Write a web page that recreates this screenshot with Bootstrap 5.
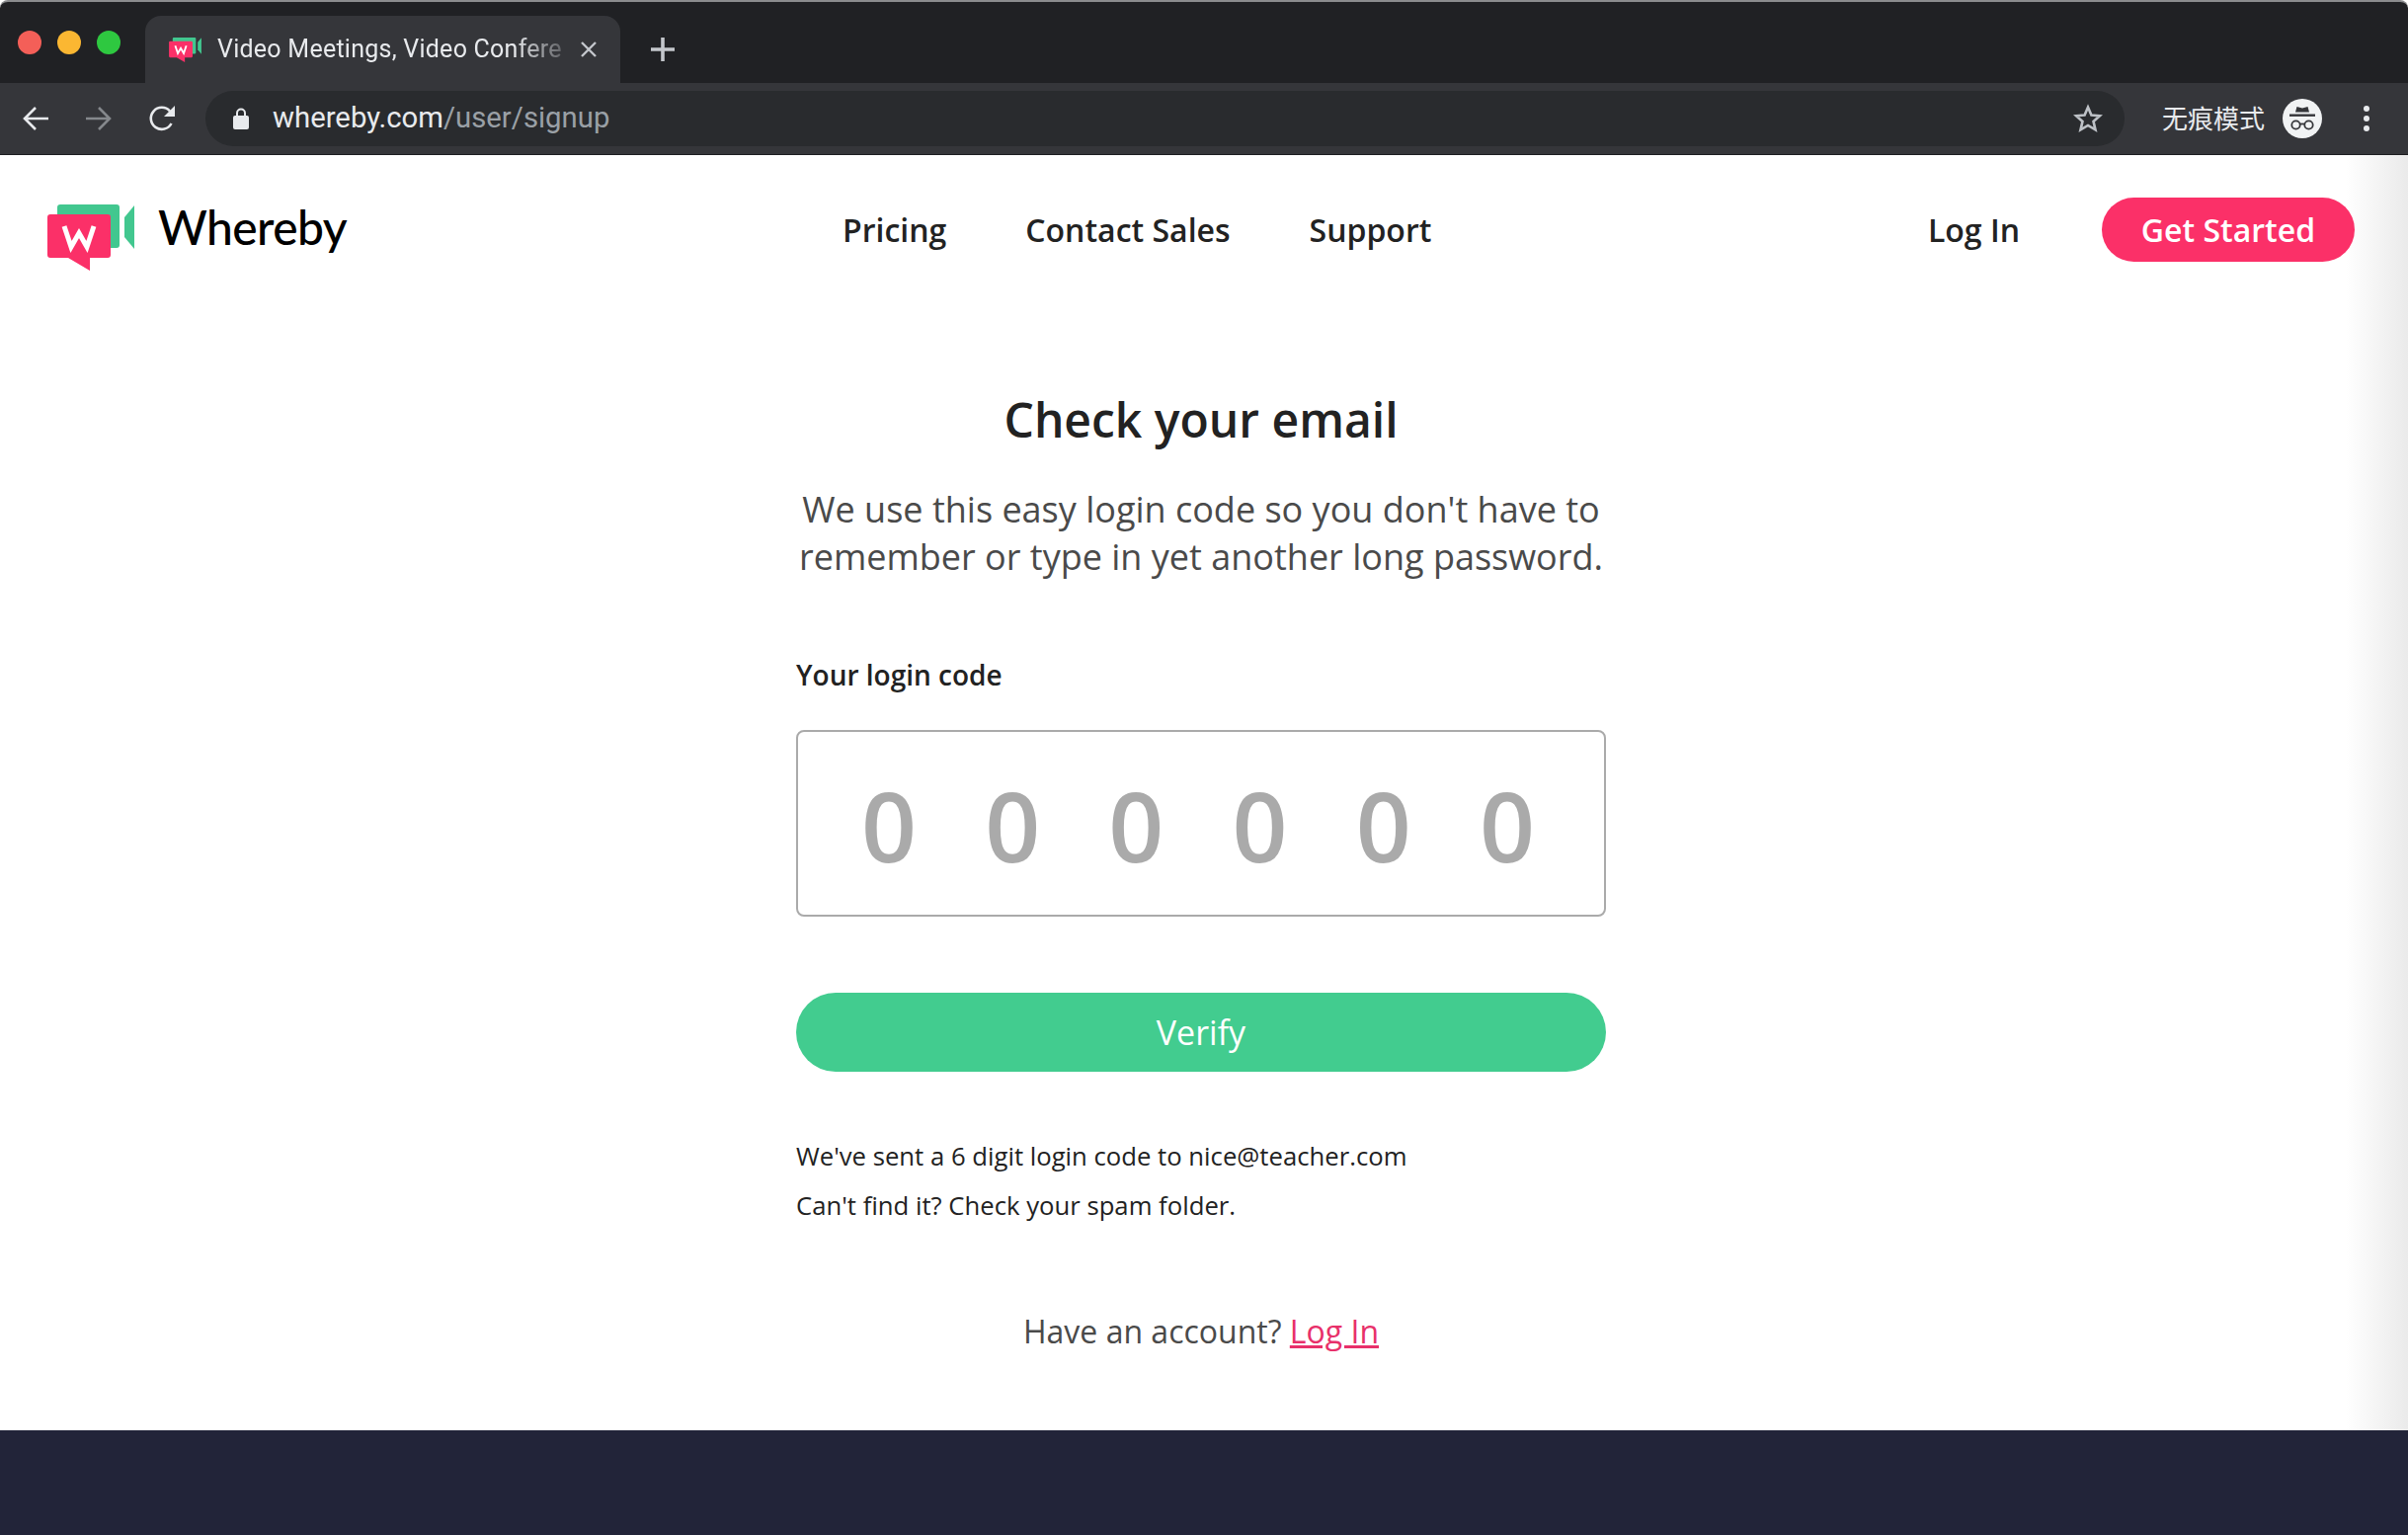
<!DOCTYPE html>
<html lang="en">
<head>
  <meta charset="UTF-8" />
  <meta name="viewport" content="width=device-width, initial-scale=1.0" />
  <title>Whereby - Check your email</title>
  <link href="https://cdn.jsdelivr.net/npm/bootstrap@5.3.0/dist/css/bootstrap.min.css" rel="stylesheet">
  <style>
    html, body { height: 100%; }
    body { width: 2438px; height: 1554px; overflow: hidden; font-family: "Open Sans", sans-serif; color: #222; background: #fff; }

    /* browser chrome */
    .tab-strip { height: 84px; flex: none; background: #202124; border-top: 2px solid #8b8c8e; border-radius: 8px 8px 0 0; }
    .lights { width: 147px; padding-left: 18px; gap: 16px; height: 82px; }
    .light { width: 24px; height: 24px; border-radius: 50%; }
    .browser-tab { width: 481px; height: 68px; margin-top: 14px; background: #35363a; border-radius: 16px 16px 0 0; padding: 0 23px 0 24px; }
    .tab-title { font-family: Roboto, sans-serif; font-size: 25px; letter-spacing: .25px; color: #e8eaed; margin-left: 16px; white-space: nowrap;
      -webkit-mask-image: linear-gradient(to right, #000 86%, rgba(0,0,0,.25) 100%); mask-image: linear-gradient(to right, #000 86%, rgba(0,0,0,.25) 100%); }
    .new-tab { margin-left: 31px; margin-top: 14px; }
    .tool-bar { height: 73px; flex: none; background: #35363a; border-bottom: 1px solid #1c1d20; padding: 0 0 0 22px; }
    .tool-icon { width: 64px; flex: none; }
    .omni-box { width: 1943px; height: 56px; margin-left: -6px; background: #292b2e; border-radius: 28px; padding: 0 22px 0 28px; }
    .url-text { font-family: Roboto, sans-serif; font-size: 29.300px; color: #e8eaed; margin-left: 24px; }
    .url-text span { color: #9aa0a6; }
    .incog-label { font-family: "Noto Sans CJK SC", sans-serif; font-size: 26px; line-height: 1; color: #e8eaed; margin-left: 38px; margin-top: -3px; white-space: nowrap; }
    .incog-face { width: 40px; height: 40px; margin-left: 18px; flex: none; }
    .dots-icon { margin-left: 41px; flex: none; }

    /* page */
    .page-main { height: 1291px; flex: none; padding: 43px 54px 0 48px;
      background: linear-gradient(to right, #fff 2375px, #eaeaea 2438px); }
    .top-nav { height: 65px; }
    .brand-box { width: 302px; flex: none; }
    .logo-mark { flex: none; margin-top: 15px; }
    .brand-name { font-family: Lato, sans-serif; font-size: 48px; font-weight: 500; letter-spacing: -.6px; color: #000; margin-left: 24px; line-height: 1; margin-top: -6px; }
    .nav-links { margin-left: 503px; gap: 80px; }
    .nav-item-link { font-size: 32px; font-weight: 600; color: #222; text-decoration: none; }
    .login-link { margin-left: auto; margin-right: 83px; }
    .start-btn { width: 256px; height: 65px; background: #fb3068; color: #fff; border: 0; border-radius: 33px; font-size: 32px; font-weight: 600; padding: 0; }
    .signup-col { width: 820px; margin: 0 auto; }
    .check-title { font-size: 48px; font-weight: 600; text-align: center; margin: 126px 0 0; line-height: 68px; color: #222; }
    .check-sub { font-size: 36px; line-height: 48px; color: #4a4a4a; text-align: center; margin: 33px 0 0; white-space: nowrap; }
    .code-label { font-size: 28px; font-weight: 600; margin: 75px 0 0; line-height: 40px; color: #222; }
    .code-box { height: 189px; margin-top: 36px; border: 2px solid #aaa; border-radius: 8px; padding: 3px 68px 0 62px; }
    .code-digit { font-size: 98px; font-weight: 600; line-height: 1; color: #aaa; width: 60px; text-align: center; }
    .verify-btn { height: 80px; width: 100%; margin-top: 77px; background: #42cc8f; color: #fff; border: 0; border-radius: 40px; font-size: 34px; font-weight: 500; padding: 0; }
    .info-line { font-size: 25.700px; line-height: 50px; margin: 0; color: #222; white-space: nowrap; }
    .have-account { font-size: 32px; line-height: 46px; color: #4a4a4a; text-align: center; margin: 79px 0 0; }
    .have-account a { color: #e8306a; }
    .page-foot { height: 106px; flex: none; background: #222439; }
  </style>
</head>
<body class="d-flex flex-column">
  <div class="tab-strip d-flex">
    <div class="lights d-flex align-items-center">
      <span class="light" style="background:#f45f58"></span>
      <span class="light" style="background:#fbb732"></span>
      <span class="light" style="background:#2ec840"></span>
    </div>
    <div class="browser-tab d-flex align-items-center">
      <svg class="flex-none" width="33" height="25" viewBox="0 0 88 67">
        <rect x="10" width="63" height="44" rx="3" fill="#42c78f"/><path d="M78 13 88 1v44L78 33z" fill="#42c78f"/>
        <path d="M3 10h58a3 3 0 0 1 3 3v38a3 3 0 0 1-3 3H43v13L21 54H3a3 3 0 0 1-3-3V13a3 3 0 0 1 3-3z" fill="#fb3068"/>
        <path d="M17 22l7 21 8-14 8 14 7-21" fill="none" stroke="#fff" stroke-width="5"/>
      </svg>
      <div class="tab-title">Video Meetings, Video Confere</div>
      <svg class="ms-auto" width="18" height="18" viewBox="0 0 18 18"><path d="M2 2l14 14M16 2L2 16" stroke="#c4c7cc" stroke-width="2.4"/></svg>
    </div>
    <svg class="new-tab align-self-center" width="24" height="24" viewBox="0 0 24 24"><path d="M12 0v24M0 12h24" stroke="#c4c7cc" stroke-width="3.6"/></svg>
  </div>

  <div class="tool-bar d-flex align-items-center">
    <div class="tool-icon"><svg class="d-block" width="28" height="28" viewBox="0 0 28 28"><path d="M27 14H3M14 3 3 14l11 11" fill="none" stroke="#e8eaed" stroke-width="2.6"/></svg></div>
    <div class="tool-icon"><svg class="d-block" width="28" height="28" viewBox="0 0 28 28"><path d="M1 14h24M14 3l11 11-11 11" fill="none" stroke="#85888c" stroke-width="2.6"/></svg></div>
    <div class="tool-icon"><svg class="d-block" width="28" height="28" viewBox="0 0 28 28"><path d="M23.5 19A11 11 0 1 1 22 6.5" fill="none" stroke="#e8eaed" stroke-width="2.6"/><path d="M27 1v11H16z" fill="#e8eaed"/></svg></div>
    <div class="omni-box d-flex align-items-center">
      <svg width="16" height="22" viewBox="0 0 16 22"><path d="M4 9V5.500a4 4 0 0 1 8 0V9" fill="none" stroke="#e8eaed" stroke-width="2"/><rect y="8" width="16" height="14" rx="2" fill="#e8eaed"/></svg>
      <div class="url-text">whereby.com<span>/user/signup</span></div>
      <svg class="ms-auto" width="30" height="30" viewBox="0 0 30 30"><path d="M15 3.500l3.400 8 8.600.7-6.500 5.700 2 8.500-7.500-4.500-7.500 4.500 2-8.500L3 12.200l8.600-.7z" fill="none" stroke="#bdc1c6" stroke-width="2.600"/></svg>
    </div>
    <div class="incog-label">无痕模式</div>
    <svg class="incog-face" viewBox="0 0 40 40">
      <circle cx="20" cy="20" r="20" fill="#f1f3f4"/>
      <path d="M13 13.500l1.500-5.500 5.500 1.500L25.500 8l1.500 5.500z" fill="#35363a"/>
      <rect x="7" y="15.500" width="26" height="2.400" fill="#35363a"/>
      <circle cx="13.500" cy="26.500" r="4.200" fill="none" stroke="#35363a" stroke-width="1.800"/>
      <circle cx="26.500" cy="26.500" r="4.200" fill="none" stroke="#35363a" stroke-width="1.800"/>
      <path d="M17.500 25.500h5" stroke="#35363a" stroke-width="1.800"/>
    </svg>
    <svg class="dots-icon" width="8" height="28" viewBox="0 0 8 28"><circle cx="4" cy="4" r="3" fill="#e8eaed"/><circle cx="4" cy="14" r="3" fill="#e8eaed"/><circle cx="4" cy="24" r="3" fill="#e8eaed"/></svg>
  </div>

  <div class="page-main">
    <nav class="top-nav d-flex align-items-center">
      <div class="brand-box d-flex align-items-center">
        <svg class="logo-mark" width="88" height="67" viewBox="0 0 88 67">
          <rect x="10" width="63" height="44" rx="3" fill="#42c78f"/><path d="M78 13 88 1v44L78 33z" fill="#42c78f"/>
          <path d="M3 10h58a3 3 0 0 1 3 3v38a3 3 0 0 1-3 3H43v13L21 54H3a3 3 0 0 1-3-3V13a3 3 0 0 1 3-3z" fill="#fb3068"/>
          <path d="M17 22l7 21 8-14 8 14 7-21" fill="none" stroke="#fff" stroke-width="5"/>
        </svg>
        <span class="brand-name">Whereby</span>
      </div>
      <div class="nav-links d-flex">
        <a class="nav-item-link" href="#">Pricing</a>
        <a class="nav-item-link" href="#">Contact Sales</a>
        <a class="nav-item-link" href="#">Support</a>
      </div>
      <a class="nav-item-link login-link" href="#">Log In</a>
      <button class="start-btn" type="button">Get Started</button>
    </nav>

    <div class="signup-col">
      <h1 class="check-title">Check your email</h1>
      <p class="check-sub">We use this easy login code so you don't have to<br>remember or type in yet another long password.</p>
      <p class="code-label">Your login code</p>
      <div class="code-box d-flex justify-content-between align-items-center">
        <span class="code-digit">0</span><span class="code-digit">0</span><span class="code-digit">0</span><span class="code-digit">0</span><span class="code-digit">0</span><span class="code-digit">0</span>
      </div>
      <button class="verify-btn" type="button">Verify</button>
      <p class="info-line" style="margin-top:61px">We've sent a 6 digit login code to nice@teacher.com</p>
      <p class="info-line">Can't find it? Check your spam folder.</p>
      <p class="have-account">Have an account? <a href="#">Log In</a></p>
    </div>
  </div>
  <div class="page-foot"></div>
  <script src="https://cdn.jsdelivr.net/npm/bootstrap@5.3.0/dist/js/bootstrap.bundle.min.js"></script>
</body>
</html>
